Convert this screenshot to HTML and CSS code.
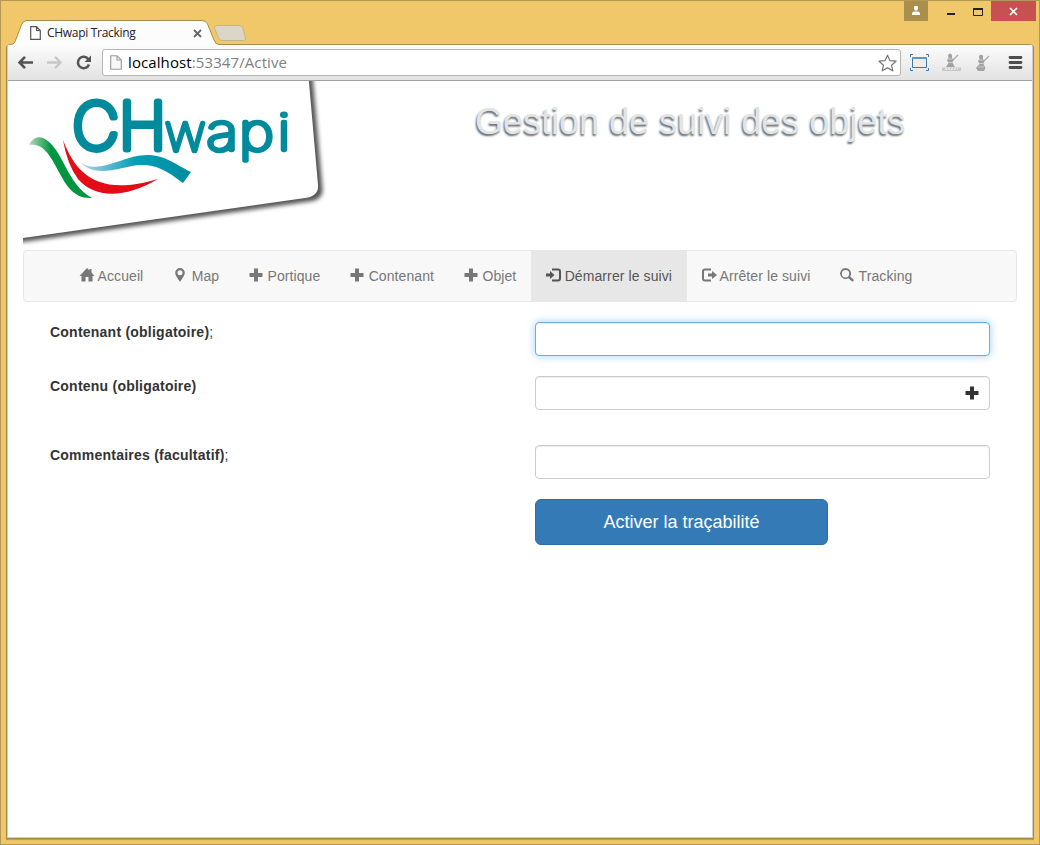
FILE: index.html
```html
<!DOCTYPE html>
<html lang="fr">
<head>
<meta charset="utf-8">
<title>CHwapi Tracking</title>
<link rel="stylesheet" href="styles.css">
</head>
<body>
<div class="window">
  <header class="titlebar">
    <svg class="tab-shape" width="1028" height="30" viewBox="0 0 1028 30">
      <path d="M.5 30V27.500Q1 24.500 5 24.500C8 24 8.500 23 9.500 20.500L15 6Q16.500 1 20 .5H196Q200 .5 201.500 4L208 20Q209.500 24.500 213 24.500H1023.500Q1027.500 24.500 1027.500 28V30" fill="#fcfcfc" stroke="#ab8c45"/>
      <path d="M211 5.500H233Q236 5.500 237 8L239.500 18Q240 20.500 237.500 20.500H216Q213.500 20.500 212.500 18L208.500 8Q208 5.500 211 5.500Z" fill="#dad6c8" stroke="#c8b481"/>
    </svg>
    <div class="tab">
      <svg class="tab-page" width="11" height="14" viewBox="0 0 11 14"><path d="M.7.7H6.500L10.300 4.500V13.300H.7ZM6.500.7V4.500H10.300" fill="#fff" stroke="#555" stroke-width="1.200"/></svg>
      <span class="tab-title">CHwapi Tracking</span>
      <svg class="tab-close" width="9" height="9" viewBox="0 0 9 9"><path d="M1 1L8 8M8 1L1 8" stroke="#666" stroke-width="1.800"/></svg>
    </div>
    <div class="window-buttons">
      <div class="user"><svg width="10" height="10" viewBox="0 0 10 10" fill="#fff"><path d="M3.500 0H6.500L7 1V3L6 4.500H4L3 3V1ZM1 8Q1 5.500 3 5.500H7Q9 5.500 9 8V9H1Z"/></svg></div>
      <svg class="minimize" width="8" height="3"><path d="M0 0H8V2H0Z" fill="#222"/></svg>
      <svg class="maximize" width="10" height="8" viewBox="0 0 10 8"><path d="M.5 1H9.500V7.500H.5Z" fill="none" stroke="#222"/><path d="M0 0H10V2H0Z" fill="#222"/></svg>
      <div class="close"><svg width="9" height="7" viewBox="0 0 9 7"><path d="M1 0L8 7M8 0L1 7" stroke="#fff" stroke-width="1.700"/></svg></div>
    </div>
  </header>
  <div class="frame">
    <div class="toolbar">
      <svg class="nav-back" width="15" height="13" viewBox="0 0 15 13"><path d="M7 .8L1.500 6.500L7 12.200M1.500 6.500H15" fill="none" stroke="#555" stroke-width="2.600"/></svg>
      <svg class="nav-forward" width="15" height="13" viewBox="0 0 15 13"><path d="M8 .8L13.500 6.500L8 12.200M13.500 6.500H0" fill="none" stroke="#c6c6c6" stroke-width="2.300"/></svg>
      <svg class="nav-reload" width="15" height="15" viewBox="0 0 15 15"><path d="M12.500 4.500A5.700 5.700 0 1 0 13 9.500" fill="none" stroke="#555" stroke-width="2.500"/><path d="M15 .5V7H8.500Z" fill="#555"/></svg>
      <div class="address">
        <svg width="12" height="15" viewBox="0 0 12 15"><path d="M.7.7H7L11.300 5V14.300H.7ZM7 .7V5H11.300" fill="#f7f7f7" stroke="#999" stroke-width="1.100"/></svg>
        <span class="url"><span class="host">localhost</span>:53347/Active</span>
        <svg class="star" width="19" height="18" viewBox="0 0 19 18"><path d="M9.500 1.200L12 6.700L18 7.200L13.500 11.200L14.800 16.800L9.500 13.900L4.200 16.800L5.500 11.200L1 7.200L7 6.700Z" fill="#fff" stroke="#777" stroke-width="1.200" stroke-linejoin="round"/></svg>
      </div>
      <svg class="ext-capture" width="19" height="17" viewBox="0 0 19 17"><path d="M.5 3V.5H3M16 .5H18.500V3M18.500 14V16.500H16M3 16.500H.5V14" fill="none" stroke="#3c77a9"/><path d="M2.500 3.500H16.500V13.500H2.500Z" fill="#ececec" stroke="#3c77a9"/><path d="M2 3H17V5H2Z" fill="#5f96c4"/></svg>
      <svg class="ext-a" width="20" height="19" viewBox="0 0 20 19"><path d="M6 2Q8-1 10 2L10 5L11.500 7L10.500 10L13 14H4L6.500 10L5 7L6.500 5Z" fill="#a2a2a2"/><path d="M10 8L16 2" stroke="#aaa" stroke-width="1.300"/><path d="M0 14.500H19V18H0Z" fill="#c8c8c8"/><path d="M3 16H16" stroke="#eee" stroke-width="1.500" stroke-dasharray="2 1"/><path d="M6 6H10M6 9.500H11" stroke="#ccc"/></svg>
      <svg class="ext-b" width="14" height="18" viewBox="0 0 14 18"><path d="M3 2Q5-1 7 2L7 5L8.500 7L7.500 10L9.500 14L8 17H2L0 14L3.500 10L2 7L3.500 5Z" fill="#a2a2a2"/><path d="M7 8L13 2" stroke="#aaa" stroke-width="1.300"/><path d="M3 6H7M3 9.500H8M2 13H8" stroke="#ccc"/></svg>
      <svg class="menu" width="13" height="13" viewBox="0 0 13 13"><path d="M1 1.500H12M1 6.500H12M1 11.500H12" stroke="#4c4c4c" stroke-width="2.800" stroke-linecap="round"/></svg>
    </div>
    <main class="page">
      <div class="banner">
        <svg class="logo" width="305" height="169" viewBox="0 0 305 169">
          <defs>
            <linearGradient id="green" x1="0" x2=".35"><stop offset="0" stop-color="#b6dcb9"/><stop offset="1" stop-color="#009640"/></linearGradient>
            <linearGradient id="teal"><stop offset="0" stop-color="#b9d3e2"/><stop offset=".5" stop-color="#00a0b8"/><stop offset="1" stop-color="#008b9d"/></linearGradient>
            <filter id="soft" x="-10%" y="-10%" width="120%" height="120%"><feGaussianBlur stdDeviation="2"/></filter>
            <clipPath id="cut"><path d="M0 0H305V169H0Z"/></clipPath>
          </defs>
          <g clip-path="url(#cut)">
            <path d="M-16-10H286L296 104Q297 115 283 117L0 157L-16 159Z" fill="#555" filter="url(#soft)" transform="translate(3.500 3.500)"/>
            <path d="M-6-10H285L295 104Q296 115 282 117L0 157L-6 158Z" fill="#fff"/>
          </g>
          <path d="M6 64Q11 54 20 57C40 66 43 103 69 117Q55 118 46 107C32 89 26 60 6 64Z" fill="url(#green)"/>
          <path d="M40 59C53 93 75 116 135 98C100 119 70 116 55 98Q44 83 40 59Z" fill="#e30d18"/>
          <path d="M57 81C75 95 100 74 124 74C143 74 153 84 168 91L160 102C142 88 131 83 116 84C96 86 73 98 57 81Z" fill="url(#teal)"/>
          <text class="logo-text"><tspan class="logo-big" x="49.500 96" y="68">CH</tspan><tspan class="logo-small" x="142" y="69.500">w</tspan></text>
          <text class="logo-text logo-small" transform="scale(1.200 1)" x="153 180 212" y="69.500">api</text>
        </svg>
        <h1 class="heading">Gestion de suivi des objets</h1>
      </div>
      <nav class="navbar">
        <a class="nav-item"><svg class="glyph" viewBox="0 0 14 14"><path d="M7 0L8.500 1.500L9.500 2.500V1H11.500V4.500L14.500 8H12.500V13.500H8.500V9H5.500V13.500H1.500V8H-.5Z"/></svg> Accueil</a>
        <a class="nav-item"><svg class="glyph" viewBox="0 0 14 14"><path fill-rule="evenodd" d="M7 0A4.800 4.800 0 0 1 11.800 4.800C11.800 8 8.500 11 7.500 13.500H6.500C5.500 11 2.200 8 2.200 4.800A4.800 4.800 0 0 1 7 0ZM7 2.300A2.500 2.500 0 1 0 7 7.300A2.500 2.500 0 1 0 7 2.300Z"/></svg> Map</a>
        <a class="nav-item"><svg class="glyph" viewBox="0 0 14 14"><path d="M5 .5H9V5H13.500V9H9V13.500H5V9H.5V5H5Z"/></svg> Portique</a>
        <a class="nav-item"><svg class="glyph" viewBox="0 0 14 14"><path d="M5 .5H9V5H13.500V9H9V13.500H5V9H.5V5H5Z"/></svg> Contenant</a>
        <a class="nav-item"><svg class="glyph" viewBox="0 0 14 14"><path d="M5 .5H9V5H13.500V9H9V13.500H5V9H.5V5H5Z"/></svg> Objet</a>
        <a class="nav-item active"><svg class="glyph" viewBox="0 0 14 14"><path d="M0 5.500H4V3L8.500 7L4 11V8.500H0ZM6 .5H12Q15 .5 15 3.500V10.500Q15 13.500 12 13.500H6V11.500H12Q13 11.500 13 10.500V3.500Q13 2.500 12 2.500H6Z"/></svg> Démarrer le suivi</a>
        <a class="nav-item"><svg class="glyph" viewBox="0 0 14 14"><path d="M6 5.500H10V3L15 7L10 11V8.500H6ZM9 .5H3Q0 .5 0 3.500V10.500Q0 13.500 3 13.500H9V11.500H3Q2 11.500 2 10.500V3.500Q2 2.500 3 2.500H9Z"/></svg> Arrêter le suivi</a>
        <a class="nav-item"><svg class="glyph" viewBox="0 0 14 14"><path fill-rule="evenodd" d="M5.500 0A5.500 5.500 0 0 1 10.200 8.400L14 12L12.300 13.800L8.500 10.200A5.500 5.500 0 1 1 5.500 0ZM5.500 2A3.700 3.700 0 1 0 5.500 9.400A3.700 3.700 0 1 0 5.500 2Z"/></svg> Tracking</a>
      </nav>
      <form class="form">
        <div class="row"><div><label class="label">Contenant (obligatoire)</label>;</div><div class="input focused"></div></div>
        <div class="row tall"><div><label class="label">Contenu (obligatoire)</label></div><div class="input with-add"><svg class="add" viewBox="0 0 14 14"><path d="M5 .5H9V5H13.500V9H9V13.500H5V9H.5V5H5Z"/></svg></div></div>
        <div class="row"><div><label class="label">Commentaires (facultatif)</label>;</div><div class="input"></div></div>
        <div class="row"><div></div><button type="button" class="submit">Activer la traçabilité</button></div>
      </form>
    </main>
  </div>
</div>
</body>
</html>
```
FILE: styles.css
```css
* { box-sizing: border-box; }
body { margin: 0; font: 14px/20px "Liberation Sans", Arial, sans-serif; color: #333; }
svg { display: block; flex: none; overflow: visible; }
.window { width: 1040px; height: 845px; background: #f0c869; border: 1px solid #b49655; padding: 0 5px 5px; display: flex; flex-direction: column; overflow: hidden; }
.titlebar { position: relative; height: 44px; flex: none; display: flex; justify-content: space-between; }
.tab-shape { position: absolute; left: 0; top: 19px; }
.tab { position: relative; display: flex; align-items: center; width: 196px; height: 24px; margin-top: 20px; padding-left: 24px; }
.tab-title { flex: 1; margin-left: 6px; font: 12px/16px "Open Sans", sans-serif; letter-spacing: -.3px; color: #222; white-space: nowrap; }
.window-buttons { position: relative; display: flex; align-items: flex-start; height: 20px; margin-right: -2px; }
.user { width: 24px; height: 20px; background: #a98f4b; padding: 5px 7px; }
.minimize { margin: 12px 0 0 19px; }
.maximize { margin: 7px 0 0 18px; }
.close { width: 45px; height: 20px; margin-left: 8px; background: #c75050; display: flex; align-items: center; justify-content: center; padding-top: 1px; }
.frame { position: relative; flex: 1; display: flex; flex-direction: column; border: 1px solid #ab8c45; border-top: 0; border-radius: 3px 3px 0 0; box-shadow: inset 1px 0 #ccc, inset -1px 0 #ccc, inset 0 -1px #ccc, 0 1px 1px #b5974f; padding: 0 1px 1px; background: #fff; }
.toolbar { height: 36px; flex: none; display: flex; align-items: center; background: linear-gradient(#fcfcfc, #e2e2e2); border-bottom: 1px solid #a0a0a0; padding-left: 10px; }
.nav-forward { margin-left: 14px; }
.nav-reload { margin-left: 14px; }
.address { display: flex; align-items: center; width: 799px; height: 27px; margin-left: 11px; padding: 0 3px 0 7px; background: #fff; border: 1px solid #b5b5b5; border-radius: 3px; }
.url { flex: 1; margin: -2px 0 0 6px; font: 15px/20px "Open Sans", sans-serif; letter-spacing: .1px; color: #808080; }
.host { color: #000; }
.ext-capture { margin-left: 9px; }
.ext-a { margin-left: 13px; }
.ext-b { margin-left: 14px; }
.menu { margin-left: 19px; }
.page { padding: 0 15px; }
.banner { display: flex; height: 169px; }
.logo-text { font-family: Inter, sans-serif; font-weight: 100; fill: #008b9d; stroke: #008b9d; stroke-linejoin: round; }
.logo-big { font-size: 64px; stroke-width: 7px; }
.logo-small { font-size: 50px; stroke-width: 4.3px; }
.heading { margin: 21px 0 0 147px; font-size: 36px; line-height: 40px; font-weight: 400; color: #e2e4e6; text-shadow: -1px 2px 2px #686c70; white-space: nowrap; }
.navbar { display: flex; height: 52px; border: 1px solid #e7e7e7; border-radius: 4px; background: #f8f8f8; padding-left: 41px; }
.nav-item { padding: 15px; color: #777; letter-spacing: .09px; white-space: nowrap; }
.nav-item.active { background: #e7e7e7; color: #555; }
.glyph { display: inline-block; width: 14px; height: 14px; margin-right: .35px; fill: currentColor; vertical-align: -1px; }
.form { padding: 20px 27px 0; }
.row { display: grid; grid-template-columns: 485px 455px; margin-bottom: 20px; }
.row.tall { margin-bottom: 35px; }
.label { font-weight: 700; letter-spacing: .23px; }
.input { height: 34px; border: 1px solid #ccc; border-radius: 4px; background: #fff; box-shadow: inset 0 1px 1px rgba(0,0,0,.075); }
.input.focused { border-color: #66afe9; box-shadow: inset 0 1px 1px rgba(0,0,0,.075), 0 0 8px rgba(102,175,233,.6); }
.with-add { display: flex; align-items: center; justify-content: flex-end; padding-right: 10px; }
.add { width: 14px; height: 14px; fill: #333; }
.submit { width: 293px; height: 46px; border: 1px solid #2e6da4; border-radius: 6px; background: #337ab7; color: #fff; font: 18px/24px "Liberation Sans", Arial, sans-serif; }
```
